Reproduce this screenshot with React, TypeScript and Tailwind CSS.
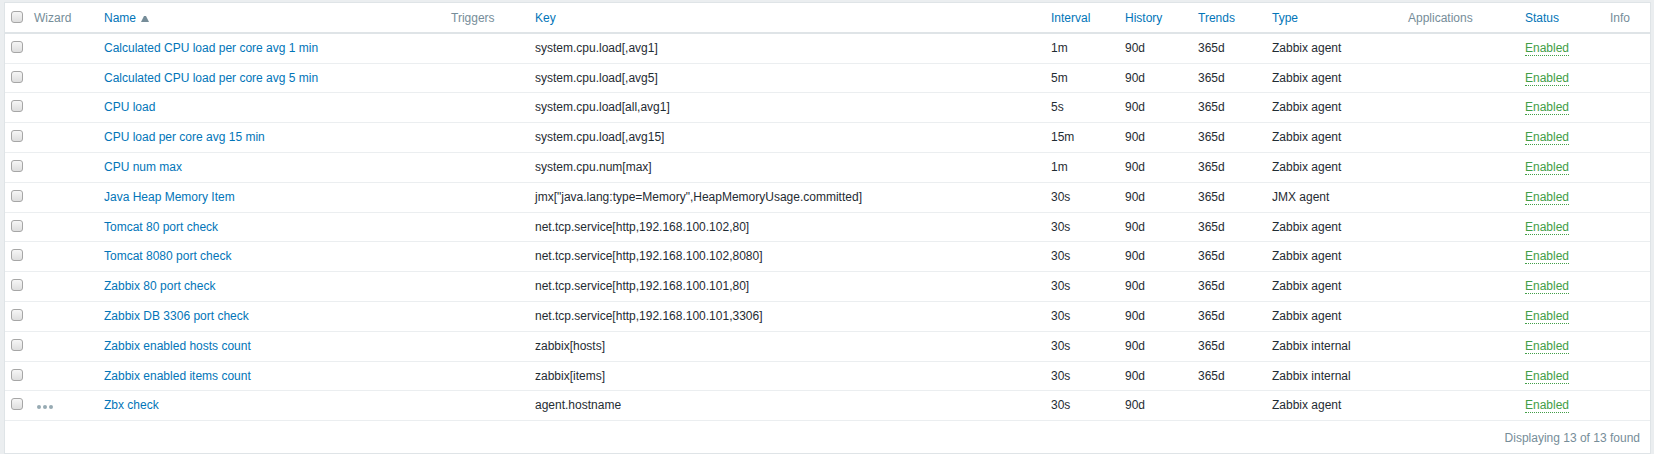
const columns = [
  { label: "Wizard", sortable: false },
  { label: "Name", sortable: true },
  { label: "Triggers", sortable: false },
  { label: "Key", sortable: true },
  { label: "Interval", sortable: true },
  { label: "History", sortable: true },
  { label: "Trends", sortable: true },
  { label: "Type", sortable: true },
  { label: "Applications", sortable: false },
  { label: "Status", sortable: true },
  { label: "Info", sortable: false },
];

type Item = {
  name: string;
  itemKey: string;
  interval: string;
  trends: string;
  type: string;
  wizard?: boolean;
};

const items: Item[] = [
  { name: "Calculated CPU load per core avg 1 min", itemKey: "system.cpu.load[,avg1]", interval: "1m", trends: "365d", type: "Zabbix agent" },
  { name: "Calculated CPU load per core avg 5 min", itemKey: "system.cpu.load[,avg5]", interval: "5m", trends: "365d", type: "Zabbix agent" },
  { name: "CPU load", itemKey: "system.cpu.load[all,avg1]", interval: "5s", trends: "365d", type: "Zabbix agent" },
  { name: "CPU load per core avg 15 min", itemKey: "system.cpu.load[,avg15]", interval: "15m", trends: "365d", type: "Zabbix agent" },
  { name: "CPU num max", itemKey: "system.cpu.num[max]", interval: "1m", trends: "365d", type: "Zabbix agent" },
  { name: "Java Heap Memory Item", itemKey: 'jmx["java.lang:type=Memory",HeapMemoryUsage.committed]', interval: "30s", trends: "365d", type: "JMX agent" },
  { name: "Tomcat 80 port check", itemKey: "net.tcp.service[http,192.168.100.102,80]", interval: "30s", trends: "365d", type: "Zabbix agent" },
  { name: "Tomcat 8080 port check", itemKey: "net.tcp.service[http,192.168.100.102,8080]", interval: "30s", trends: "365d", type: "Zabbix agent" },
  { name: "Zabbix 80 port check", itemKey: "net.tcp.service[http,192.168.100.101,80]", interval: "30s", trends: "365d", type: "Zabbix agent" },
  { name: "Zabbix DB 3306 port check", itemKey: "net.tcp.service[http,192.168.100.101,3306]", interval: "30s", trends: "365d", type: "Zabbix agent" },
  { name: "Zabbix enabled hosts count", itemKey: "zabbix[hosts]", interval: "30s", trends: "365d", type: "Zabbix internal" },
  { name: "Zabbix enabled items count", itemKey: "zabbix[items]", interval: "30s", trends: "365d", type: "Zabbix internal" },
  { name: "Zbx check", itemKey: "agent.hostname", interval: "30s", trends: "", type: "Zabbix agent", wizard: true },
];

const headCell = "border-b-2 border-[#dfe4e7] px-[5px] pt-[7px] pb-[5px] font-normal";
const cell = "border-b border-[#ebeef0] px-[5px] py-[6px]";

function Checkbox({ label }: { label: string }) {
  return (
    <input
      type="checkbox"
      aria-label={label}
      className="block size-3 appearance-none rounded-[3px] border border-[#a6a6a6] bg-linear-to-b from-[#f6f6f6] to-[#dedede] checked:bg-[#0275b8]"
    />
  );
}

export default function App() {
  return (
    <main className="bg-[#ebeef0] pt-[2px] pr-[3px] pl-1 font-['Liberation_Sans',Arial,sans-serif] text-[12px] leading-[1.4] text-[#1f2c33]">
      <div className="border border-[#dfe4e7] bg-white">
        <table className="w-full table-fixed border-separate border-spacing-0 text-left">
          <colgroup>
            <col className="w-6" />
            <col className="w-[70px]" />
            <col className="w-[347px]" />
            <col className="w-[84px]" />
            <col />
            <col className="w-[74px]" />
            <col className="w-[73px]" />
            <col className="w-[74px]" />
            <col className="w-[136px]" />
            <col className="w-[117px]" />
            <col className="w-[85px]" />
            <col className="w-[45px]" />
          </colgroup>
          <thead>
            <tr className="text-[#768d99]">
              <th className="border-b-2 border-[#dfe4e7] pt-2 pl-[6px] align-top">
                <Checkbox label="Select all items" />
              </th>
              {columns.map((column) => (
                <th key={column.label} className={headCell}>
                  {column.sortable ? (
                    <a href="#sort" className="text-[#0275b8]">
                      {column.label}
                      {column.label === "Name" && (
                        <svg viewBox="0 0 8 6" className="ml-[5px] inline-block h-[6px] w-2 align-baseline" aria-hidden="true">
                          <path d="M0 6 3 0H5L8 6Z" fill="#768d99" />
                        </svg>
                      )}
                    </a>
                  ) : (
                    column.label
                  )}
                </th>
              ))}
            </tr>
          </thead>
          <tbody>
            {items.map((item) => (
              <tr key={item.name}>
                <td className="border-b border-[#ebeef0] pt-[7px] pl-[6px] align-top">
                  <Checkbox label={`Select ${item.name}`} />
                </td>
                <td className="border-b border-[#ebeef0] px-2 py-[6px]">
                  {item.wizard && (
                    <button type="button" aria-label="Open item menu" className="flex gap-[2px] pt-[2px]">
                      <span className="size-1 rounded-full bg-[#97aab3]" />
                      <span className="size-1 rounded-full bg-[#97aab3]" />
                      <span className="size-1 rounded-full bg-[#97aab3]" />
                    </button>
                  )}
                </td>
                <td className={cell}>
                  <a href="#item" className="text-[#0275b8]">{item.name}</a>
                </td>
                <td className={cell} />
                <td className={cell}>{item.itemKey}</td>
                <td className={cell}>{item.interval}</td>
                <td className={cell}>90d</td>
                <td className={cell}>{item.trends}</td>
                <td className={cell}>{item.type}</td>
                <td className={cell} />
                <td className={cell}>
                  <a href="#status" className="border-b border-dotted border-[#429e47] text-[#429e47]">Enabled</a>
                </td>
                <td className={cell} />
              </tr>
            ))}
          </tbody>
        </table>
        <p className="px-[10px] pt-[9px] pb-[6px] text-right text-[#768d99]">Displaying 13 of 13 found</p>
      </div>
    </main>
  );
}
